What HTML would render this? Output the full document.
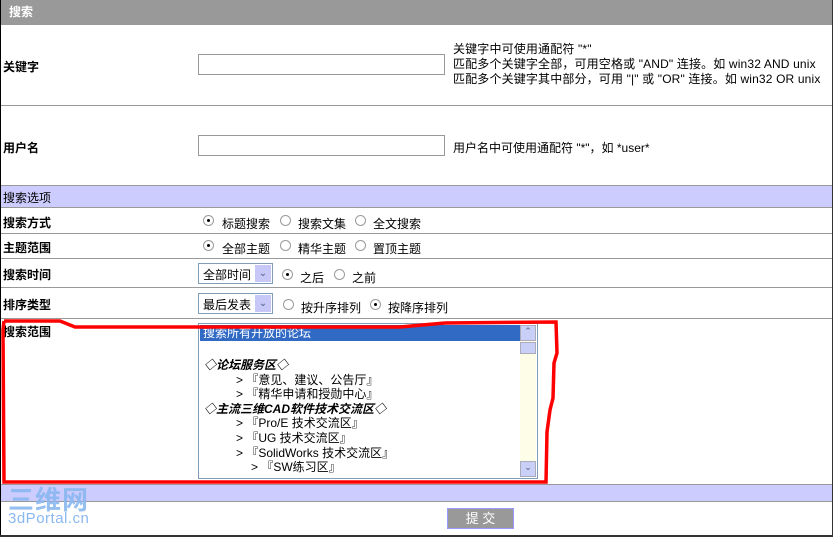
<!DOCTYPE html>
<html><head><meta charset="utf-8"><style>
*{margin:0;padding:0;box-sizing:border-box}
body{width:833px;height:537px;background:#fff;position:relative;overflow:hidden;font-family:"Liberation Sans","WenQuanYi Zen Hei","Noto Sans CJK SC",sans-serif;font-size:12px;color:#000}
.a{position:absolute;white-space:nowrap}
.b{font-weight:bold}
.hl{position:absolute;left:1px;width:831px;height:1px;background:#999}
.in{position:absolute;border:1px solid #999;background:#fff}
.r{position:absolute;width:11px;height:11px;border-radius:50%;border:1px solid #9a9a9a;background:#fff}
.r.c::after{content:"";position:absolute;left:3px;top:3px;width:3px;height:3px;background:#000;border-radius:50%}
.sel{position:absolute;height:21px;border:1px solid #7f9db9;background:#fff;padding:2px 0 0 4px}
.sel i{position:absolute;right:1px;top:1px;width:16px;height:17px;background:#c8c8f8;color:#4d6185;font-style:normal;font-size:10px;text-align:center;line-height:17px}
</style></head><body>
<div class="a" style="left:0;top:0;width:1px;height:537px;background:#000"></div>
<div class="a" style="left:832px;top:0;width:1px;height:537px;background:#333"></div>
<div class="a" style="left:1px;top:0;width:831px;height:25px;background:#999"></div>
<div class="a b" style="left:9px;top:3px;color:#fff">搜索</div>

<div class="a b" style="left:3px;top:58px">关键字</div>
<div class="in" style="left:198px;top:54px;width:247px;height:21px"></div>
<div class="a" style="left:453px;top:42px;line-height:15px;letter-spacing:0.15px">关键字中可使用通配符 "*"<br>匹配多个关键字全部，可用空格或 "AND" 连接。如 win32 AND unix<br>匹配多个关键字其中部分，可用 "|" 或 "OR" 连接。如 win32 OR unix</div>
<div class="hl" style="top:105px"></div>

<div class="a b" style="left:3px;top:139px">用户名</div>
<div class="in" style="left:198px;top:135px;width:247px;height:21px"></div>
<div class="a" style="left:453px;top:139px">用户名中可使用通配符 "*"，如 *user*</div>
<div class="hl" style="top:185px"></div>
<div class="a" style="left:1px;top:186px;width:831px;height:21px;background:#ccf"></div>
<div class="a" style="left:3px;top:189px">搜索选项</div>
<div class="hl" style="top:207px"></div>

<div class="a b" style="left:3px;top:214px">搜索方式</div>
<div class="r c" style="left:203px;top:215px"></div><div class="a" style="left:222px;top:215px">标题搜索</div>
<div class="r" style="left:280px;top:215px"></div><div class="a" style="left:298px;top:215px">搜索文集</div>
<div class="r" style="left:355px;top:215px"></div><div class="a" style="left:373px;top:215px">全文搜索</div>
<div class="hl" style="top:233px"></div>

<div class="a b" style="left:3px;top:239px">主题范围</div>
<div class="r c" style="left:203px;top:240px"></div><div class="a" style="left:222px;top:240px">全部主题</div>
<div class="r" style="left:280px;top:240px"></div><div class="a" style="left:298px;top:240px">精华主题</div>
<div class="r" style="left:355px;top:240px"></div><div class="a" style="left:373px;top:240px">置顶主题</div>
<div class="hl" style="top:258px"></div>

<div class="a b" style="left:3px;top:266px">搜索时间</div>
<div class="sel" style="left:198px;top:263px;width:75px">全部时间<i>⌄</i></div>
<div class="r c" style="left:282px;top:269px"></div><div class="a" style="left:300px;top:269px">之后</div>
<div class="r" style="left:334px;top:269px"></div><div class="a" style="left:352px;top:269px">之前</div>
<div class="hl" style="top:287px"></div>

<div class="a b" style="left:3px;top:296px">排序类型</div>
<div class="sel" style="left:198px;top:293px;width:75px">最后发表<i>⌄</i></div>
<div class="r" style="left:283px;top:299px"></div><div class="a" style="left:301px;top:299px">按升序排列</div>
<div class="r c" style="left:370px;top:299px"></div><div class="a" style="left:388px;top:299px">按降序排列</div>
<div class="hl" style="top:318px"></div>

<div class="a b" style="left:3px;top:323px">搜索范围</div>
<div class="a" style="left:198px;top:323px;width:340px;height:156px;border:1px solid #7f9db9;background:#fff;overflow:hidden">
 <div style="position:absolute;left:1px;top:1px;width:320px;height:16px;background:#316ac5;color:#fff;padding-left:3px;line-height:16px">搜索所有开放的论坛</div>
 <div style="position:absolute;left:5px;top:34px;line-height:14.6px">
  <b><i>◇论坛服务区◇</i></b><br>
  <span style="padding-left:32px">&gt; 『意见、建议、公告厅』</span><br>
  <span style="padding-left:32px">&gt; 『精华申请和授勋中心』</span><br>
  <b><i>◇主流三维CAD软件技术交流区◇</i></b><br>
  <span style="padding-left:32px">&gt; 『Pro/E 技术交流区』</span><br>
  <span style="padding-left:32px">&gt; 『UG 技术交流区』</span><br>
  <span style="padding-left:32px">&gt; 『SolidWorks 技术交流区』</span><br>
  <span style="padding-left:47px">&gt; 『SW练习区』</span>
 </div>
 <div style="position:absolute;right:1px;top:1px;width:16px;height:152px;background:#fdfde8">
  <div style="height:16px;background:#c8d0f8;border:1px solid #aab;font-size:9px;text-align:center;color:#4d6185">⌃</div>
  <div style="height:12px;margin-top:1px;background:#c8d0f8;border:1px solid #aab"></div>
  <div style="position:absolute;bottom:0;width:16px;height:16px;background:#c8d0f8;border:1px solid #aab;font-size:9px;text-align:center;color:#4d6185">⌄</div>
 </div>
</div>
<svg class="a" style="left:0;top:0" width="833" height="537"><polyline fill="none" stroke="#f00" stroke-width="3.5" points="4,321 60,321 75,327 400,327 445,323 556,322 557,353 554,363 553,398 550,410 547,432 546,482 4,482 3,330 4,321"/></svg>
<div class="hl" style="top:484px"></div>
<div class="a" style="left:1px;top:485px;width:831px;height:16px;background:#ccf"></div>
<div class="hl" style="top:501px"></div>
<div class="a" style="left:8px;top:480px;color:#8ab8f0;font-size:26px;font-weight:bold;letter-spacing:1px;opacity:.9">三维网</div>
<div class="a" style="left:8px;top:510px;color:#8ab8f0;font-size:15px;letter-spacing:0.5px">3dPortal.cn</div>
<div class="a" style="left:447px;top:508px;width:67px;height:21px;background:#999;border:1px solid #99f;color:#fff;text-align:center;line-height:19px;font-size:13px">提 交</div>
<div class="a" style="left:0;top:535px;width:833px;height:2px;background:#333"></div>
</body></html>
